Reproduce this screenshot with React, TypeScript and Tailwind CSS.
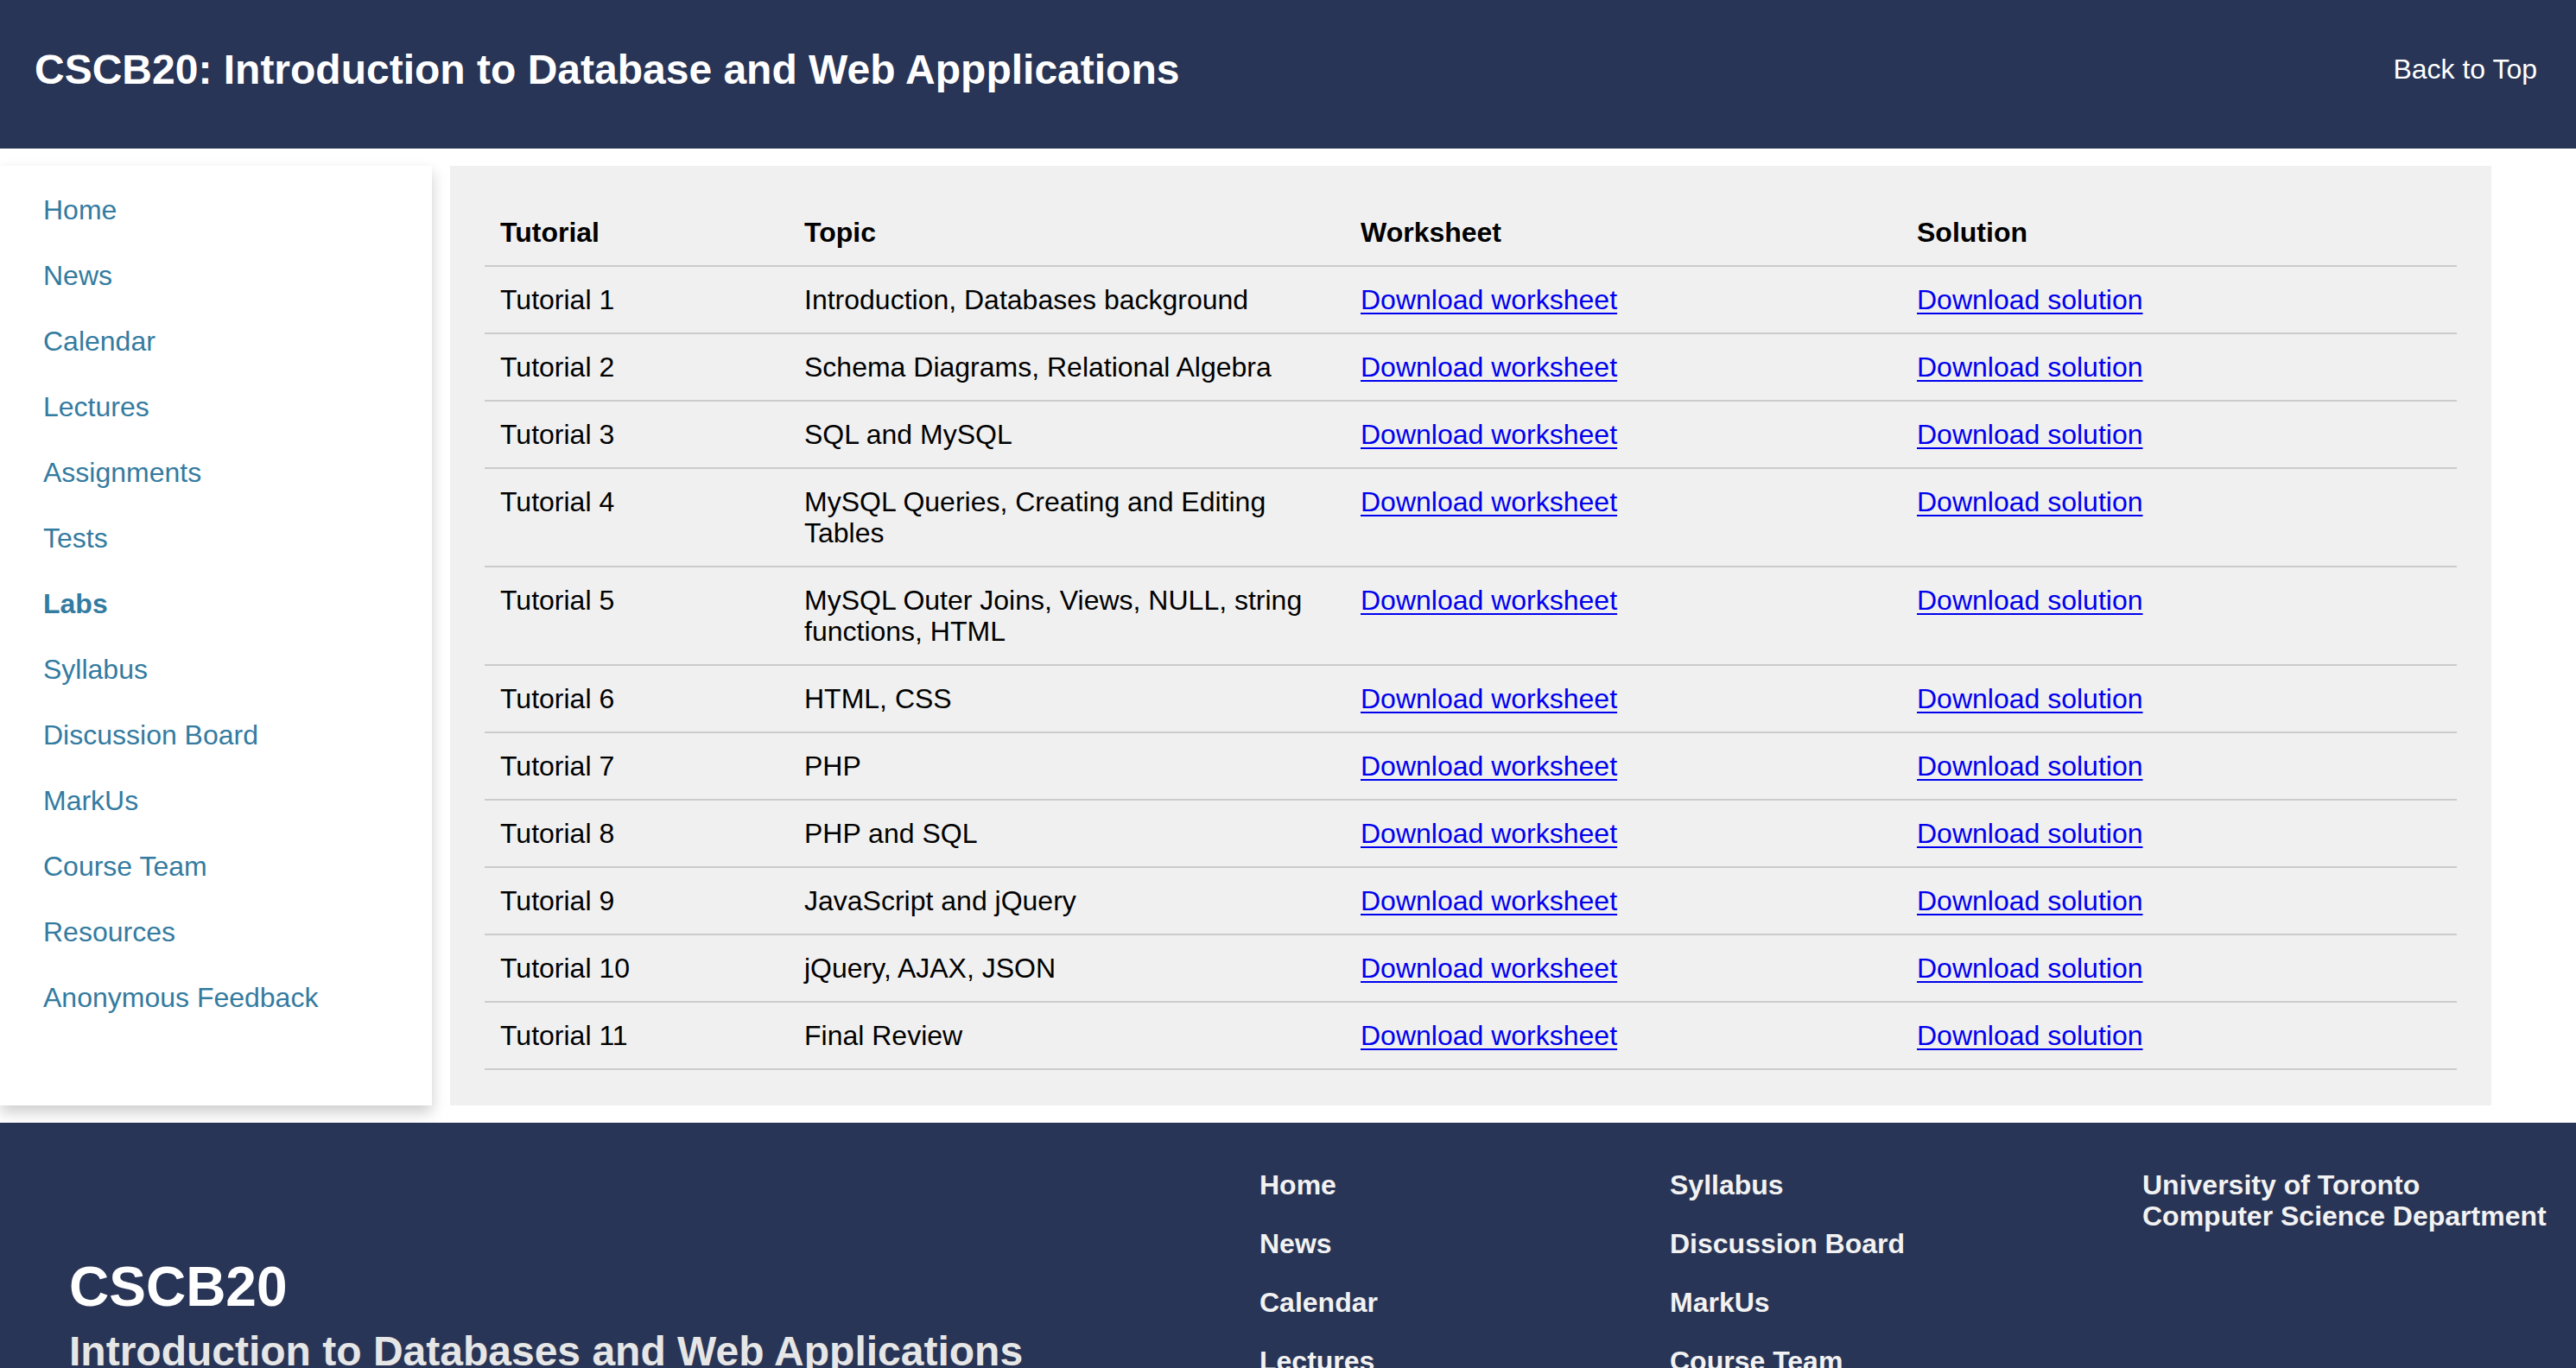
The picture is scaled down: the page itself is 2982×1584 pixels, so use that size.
import React from 'react'

type Tutorial = {
  name: string
  topic: string
}

const navItems = [
  'Home',
  'News',
  'Calendar',
  'Lectures',
  'Assignments',
  'Tests',
  'Labs',
  'Syllabus',
  'Discussion Board',
  'MarkUs',
  'Course Team',
  'Resources',
  'Anonymous Feedback',
]

const tutorials: Tutorial[] = [
  { name: 'Tutorial 1', topic: 'Introduction, Databases background' },
  { name: 'Tutorial 2', topic: 'Schema Diagrams, Relational Algebra' },
  { name: 'Tutorial 3', topic: 'SQL and MySQL' },
  { name: 'Tutorial 4', topic: 'MySQL Queries, Creating and Editing Tables' },
  { name: 'Tutorial 5', topic: 'MySQL Outer Joins, Views, NULL, string functions, HTML' },
  { name: 'Tutorial 6', topic: 'HTML, CSS' },
  { name: 'Tutorial 7', topic: 'PHP' },
  { name: 'Tutorial 8', topic: 'PHP and SQL' },
  { name: 'Tutorial 9', topic: 'JavaScript and jQuery' },
  { name: 'Tutorial 10', topic: 'jQuery, AJAX, JSON' },
  { name: 'Tutorial 11', topic: 'Final Review' },
]

const footerCol1 = ['Home', 'News', 'Calendar', 'Lectures', 'Assignments', 'Tests', 'Labs']
const footerCol2 = ['Syllabus', 'Discussion Board', 'MarkUs', 'Course Team', 'Resources', 'Anonymous Feedback']

const Header = () => (
  <header className='h-[172px] bg-[#293556] flex items-center justify-between pl-[40px] pr-[45px] pb-[11px]'>
    <h1 className='text-[48px] font-bold text-white leading-[55px]'>CSCB20: Introduction to Database and Web Appplications</h1>
    <a href='#' className='text-[32px] text-white leading-[37px]'>Back to Top</a>
  </header>
)

const Sidebar = () => (
  <nav className='w-[500px] shrink-0 bg-white shadow-[0_8px_16px_rgba(0,0,0,0.2)] pt-[13px] pl-[50px]'>
    <ul>
      {navItems.map((item) => (
        <li key={item} className='py-[20px] text-[32px] leading-[36px]'>
          <a href='#' className={`text-[#347ba0] ${item === 'Labs' ? 'font-bold' : ''}`}>
            {item}
          </a>
        </li>
      ))}
    </ul>
  </nav>
)

const TutorialTable = () => (
  <main className='w-[2363px] shrink-0 bg-[#f0f0f0] pt-[39px] pb-[41px] px-[40px]'>
    <table className='w-full table-fixed border-collapse text-[32px] text-black leading-[36px]'>
      <colgroup>
        <col className='w-[352px]' />
        <col className='w-[644px]' />
        <col className='w-[644px]' />
        <col />
      </colgroup>
      <thead>
        <tr className='border-b-2 border-[#cbcbcb]'>
          <th className='text-left font-bold pl-[18px] pr-[22px] py-[20px]'>Tutorial</th>
          <th className='text-left font-bold pl-[18px] pr-[22px] py-[20px]'>Topic</th>
          <th className='text-left font-bold pl-[18px] pr-[22px] py-[20px]'>Worksheet</th>
          <th className='text-left font-bold pl-[18px] pr-[22px] py-[20px]'>Solution</th>
        </tr>
      </thead>
      <tbody>
        {tutorials.map((t) => (
          <tr key={t.name} className='border-b-2 border-[#cbcbcb] align-top'>
            <td className='pl-[18px] pr-[22px] py-[20px]'>{t.name}</td>
            <td className='pl-[18px] pr-[22px] py-[20px]'>{t.topic}</td>
            <td className='pl-[18px] pr-[22px] py-[20px]'>
              <a href='#' className='text-[#0000ee] underline decoration-2 underline-offset-[4px]'>Download worksheet</a>
            </td>
            <td className='pl-[18px] pr-[22px] py-[20px]'>
              <a href='#' className='text-[#0000ee] underline decoration-2 underline-offset-[4px]'>Download solution</a>
            </td>
          </tr>
        ))}
      </tbody>
    </table>
  </main>
)

const Footer = () => (
  <footer className='mt-[20px] bg-[#293556] flex pl-[80px] pt-[54px] pb-[60px]'>
    <div className='w-[1378px] shrink-0 pt-[99px]'>
      <h2 className='text-[64px] font-bold text-white leading-[74px]'>CSCB20</h2>
      <p className='mt-[10px] text-[48px] font-bold text-[#e6e6e6] leading-[55px]'>Introduction to Databases and Web Applications</p>
    </div>
    <ul className='w-[475px] shrink-0 flex flex-col gap-[31px]'>
      {footerCol1.map((item) => (
        <li key={item} className='text-[32px] font-bold text-[#f2f2f2] leading-[37px]'>{item}</li>
      ))}
    </ul>
    <ul className='w-[547px] shrink-0 flex flex-col gap-[31px]'>
      {footerCol2.map((item) => (
        <li key={item} className='text-[32px] font-bold text-[#f2f2f2] leading-[37px]'>{item}</li>
      ))}
    </ul>
    <div className='text-[32px] font-bold text-[#f2f2f2] leading-[36px]'>
      <p>University of Toronto</p>
      <p>Computer Science Department</p>
    </div>
  </footer>
)

export default function App() {
  return (
    <div className="min-h-screen bg-white font-['Liberation_Sans',Arial,sans-serif]">
      <Header />
      <div className='flex gap-[21px] mt-[20px]'>
        <Sidebar />
        <TutorialTable />
      </div>
      <Footer />
    </div>
  )
}
